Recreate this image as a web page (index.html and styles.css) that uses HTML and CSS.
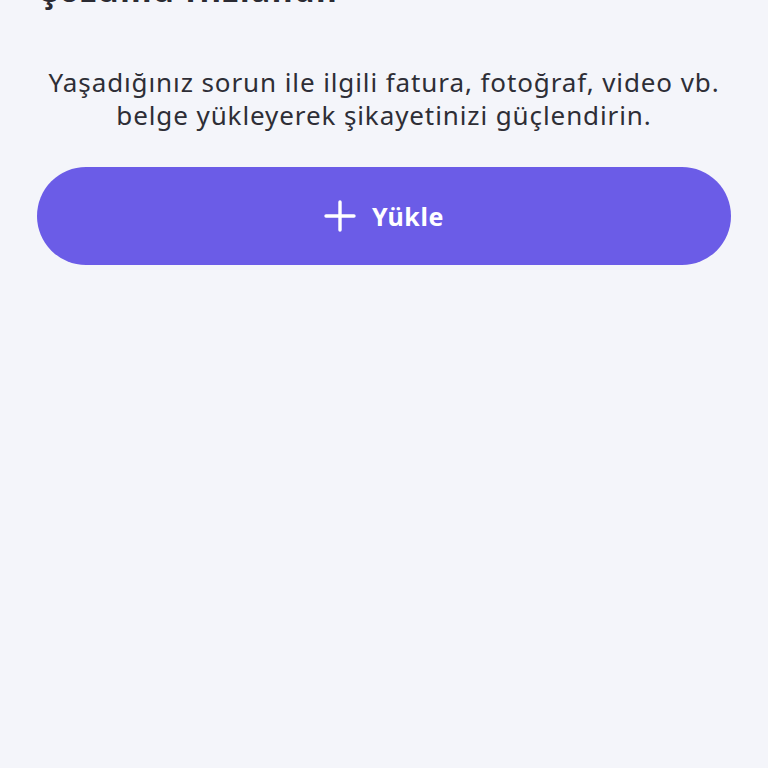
FILE: index.html
```html
<!DOCTYPE html>
<html lang="tr">
<head>
    <meta charset="UTF-8">
    <meta name="viewport" content="width=device-width, initial-scale=1.0">
    <title>Belge Yükle</title>
    <link rel="stylesheet" href="styles.css">
</head>
<body>
    <div class="page">
        <h2 class="section-title">Çözümü Hızlandır</h2>
        <p class="section-text">Yaşadığınız sorun ile ilgili fatura, fotoğraf, video vb.<br>belge yükleyerek şikayetinizi güçlendirin.</p>
        <button class="upload-btn">
            <svg class="upload-icon" viewBox="0 0 32 32" width="32" height="32">
                <path d="M16 2 V30 M2 16 H30" stroke="#fff" stroke-width="3.4" stroke-linecap="round" fill="none"/>
            </svg>
            <span>Yükle</span>
        </button>
    </div>
</body>
</html>
```

FILE: styles.css
```css
html, body {
    margin: 0;
    padding: 0;
    background-color: #f4f5fa;
    font-family: 'Noto Sans', 'Open Sans', sans-serif;
    overflow: hidden;
}

.page {
    display: flex;
    flex-direction: column;
    padding: 0 37px;
    margin-top: -30px;
}

.section-title {
    margin: 0;
    font-size: 32px;
    line-height: 40px;
    font-weight: 700;
    letter-spacing: 1.6px;
    color: #2b2b33;
}

.section-text {
    margin: 56px 0 0;
    text-align: center;
    font-size: 26px;
    line-height: 33px;
    letter-spacing: 0.9px;
    color: #2e2e36;
}

.upload-btn {
    margin-top: 35px;
    height: 98px;
    border: none;
    border-radius: 49px;
    background-color: #6b5ce7;
    color: #fff;
    display: flex;
    align-items: center;
    justify-content: center;
    gap: 16px;
    font-family: inherit;
    font-size: 25px;
    font-weight: 700;
    letter-spacing: 0.6px;
    cursor: pointer;
}

.upload-icon {
    display: block;
}
```
